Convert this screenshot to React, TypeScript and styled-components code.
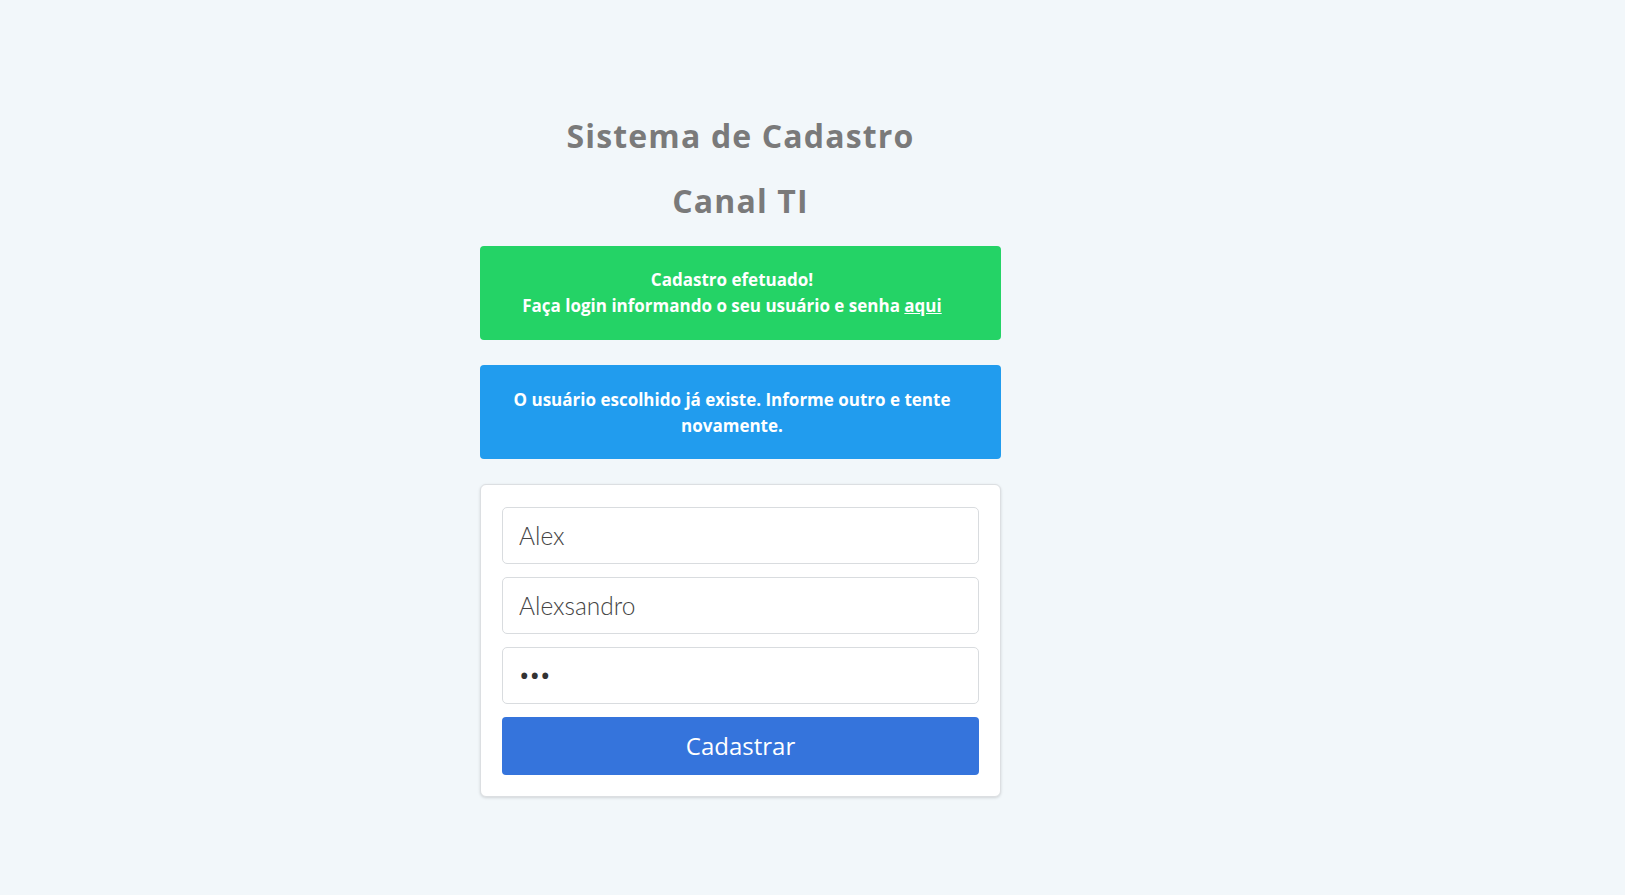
import React from "react";
import styled, { createGlobalStyle } from "styled-components";

const GlobalStyle = createGlobalStyle`
  html, body {
    margin: 0;
    padding: 0;
    background: #f2f7fa;
    font-family: "Open Sans", "Liberation Sans", sans-serif;
  }
  * { box-sizing: border-box; }
`;

const Page = styled.main`
  min-height: 895px;
  padding-top: 93px;
`;

const Column = styled.div`
  width: 521px;
  margin-left: 480px;
`;

const Header = styled.header`
  display: flow-root;
  margin-bottom: 2px;
`;

const Title = styled.h1`
  margin: 21.4px 0;
  font-size: 32px;
  font-weight: 700;
  letter-spacing: 0.036em;
  color: #7a7a7a;
  text-align: center;
  line-height: 1.362;
`;

const Alert = styled.div<{ $tone: "success" | "info" }>`
  background: ${(p) => (p.$tone === "success" ? "#24d366" : "#219cee")};
  color: #ffffff;
  border-radius: 4px;
  padding: ${(p) => (p.$tone === "success" ? "21px" : "22px")} 37px 21px 20px;
  margin-bottom: ${(p) => (p.$tone === "success" ? "25.5px" : "24.5px")};
  font-size: 17px;
  font-weight: 700;
  line-height: 25.6px;
  text-align: center;
`;

const AlertLink = styled.a`
  color: #ffffff;
  text-decoration: underline;
`;

const Card = styled.form`
  background: #ffffff;
  border: 1px solid #dcdfe2;
  border-radius: 6px;
  box-shadow: 0 1px 3px rgba(0, 0, 0, 0.14);
  padding: 22px 21px 21px;
  display: flex;
  flex-direction: column;
  gap: 13px;
`;

const Field = styled.input`
  height: 57px;
  width: 100%;
  border: 1px solid #d9dcdf;
  border-radius: 5px;
  padding: 0 16px;
  font-family: Lato, "Liberation Sans", sans-serif;
  font-weight: 300;
  font-size: 24.5px;
  color: #444;
  background: #fff;
  outline: none;
  &[type="password"] {
    font-family: "Open Sans", sans-serif;
    font-weight: 400;
    font-size: 28px;
    color: #333;
  }
`;

const Submit = styled.button`
  height: 58px;
  width: 100%;
  border: none;
  border-radius: 4px;
  background: #3574dc;
  color: #ffffff;
  font-family: "Open Sans", "Liberation Sans", sans-serif;
  font-size: 24px;
  font-weight: 400;
  cursor: pointer;
`;

export default function App() {
  return (
    <>
      <GlobalStyle />
      <Page>
        <Column>
          <Header>
            <Title>Sistema de Cadastro</Title>
            <Title>Canal TI</Title>
          </Header>
          <Alert $tone="success">
            Cadastro efetuado!
            <br />
            Faça login informando o seu usuário e senha <AlertLink href="#">aqui</AlertLink>
          </Alert>
          <Alert $tone="info">
            O usuário escolhido já existe. Informe outro e tente novamente.
          </Alert>
          <Card onSubmit={(e) => e.preventDefault()}>
            <Field type="text" defaultValue="Alex" />
            <Field type="text" defaultValue="Alexsandro" />
            <Field type="password" defaultValue="123" />
            <Submit type="submit">Cadastrar</Submit>
          </Card>
        </Column>
      </Page>
    </>
  );
}
